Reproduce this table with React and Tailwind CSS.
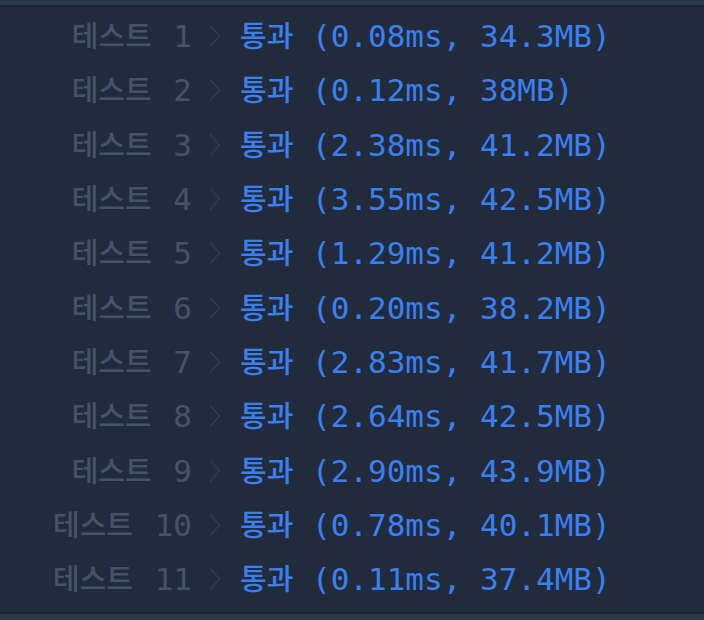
const rows = [
  ["1", "0.08ms, 34.3MB"],
  ["2", "0.12ms, 38MB"],
  ["3", "2.38ms, 41.2MB"],
  ["4", "3.55ms, 42.5MB"],
  ["5", "1.29ms, 41.2MB"],
  ["6", "0.20ms, 38.2MB"],
  ["7", "2.83ms, 41.7MB"],
  ["8", "2.64ms, 42.5MB"],
  ["9", "2.90ms, 43.9MB"],
  ["10", "0.78ms, 40.1MB"],
  ["11", "0.11ms, 37.4MB"],
];

const mono = { fontFamily: '"DejaVu Sans Mono", "Noto Sans CJK KR", monospace' };
const kr = { fontFamily: '"Noto Sans CJK KR", sans-serif' };

function Chevron() {
  return (
    <svg width="14" height="24" viewBox="0 0 14 24" className="shrink-0">
      <path d="M2 1.5 L11.5 12 L2 22.5" fill="none" stroke="#333d4f" strokeWidth="1.4" />
    </svg>
  );
}

export default function App() {
  return (
    <div className="w-[704px] h-[620px] bg-[#222b3c] flex flex-col overflow-hidden">
      <div className="h-[5px] bg-[#2c394d] shrink-0" />
      <div className="h-[2px] bg-[#1c2332] shrink-0" />
      <div className="flex-1 flex flex-col pt-[2px]">
        {rows.map(([n, r]) => (
          <div key={n} className="h-[54.3px] flex items-center text-[31px] leading-none" style={mono}>
            <div className="w-[192px] text-right text-[#465367] whitespace-pre">
              <span className="text-[29px] font-medium mr-[3px]" style={kr}>테스트</span>
              {" " + n}
            </div>
            <div className="w-[46px] flex justify-center">
              <Chevron />
            </div>
            <div className="pl-[2px] text-[#3b80ef] whitespace-pre">
              <span className="text-[29px] font-medium" style={kr}>통과</span>
              {" (" + r + ")"}
            </div>
          </div>
        ))}
      </div>
      <div className="h-[2px] bg-[#1c2332] shrink-0" />
      <div className="h-[6px] bg-[#2c394d] shrink-0" />
    </div>
  );
}
